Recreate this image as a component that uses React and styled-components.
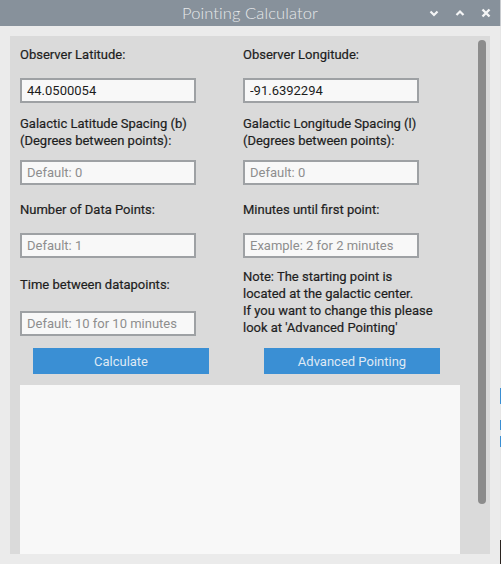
import React from "react";
import styled, { createGlobalStyle } from "styled-components";

const Global = createGlobalStyle`
  html, body { margin: 0; padding: 0; background: #ebebeb; }
  body { width: 501px; height: 564px; overflow: hidden; font-family: Roboto, "Liberation Sans", sans-serif; }
  * { box-sizing: border-box; }
`;

const Frame = styled.div`
  display: flex;
  width: 501px;
  height: 564px;
`;

const Window = styled.div`
  width: 500px;
  height: 564px;
  display: flex;
  flex-direction: column;
  background: #ebebeb;
`;

const EdgeStrip = styled.div`
  width: 1px;
  height: 564px;
  background: linear-gradient(
    #c9ccd0 0 26px,
    #e6e6e6 26px 388px,
    #3a8fd4 388px 404px,
    #e6e6e6 404px 420px,
    #3a8fd4 420px 430px,
    #e6e6e6 430px 436px,
    #3a8fd4 436px 447px,
    #e6e6e6 447px 540px,
    #2b2420 540px
  );
`;

const TitleBar = styled.div`
  height: 26px;
  background: #87919b;
  position: relative;
  display: flex;
  align-items: center;
  justify-content: center;
`;

const Title = styled.div`
  font-family: Lato, "Open Sans", sans-serif;
  font-weight: 300;
  font-size: 16.5px;
  color: #e6e8ea;
  letter-spacing: 0.1px;
`;

const TitleButtons = styled.div`
  position: absolute;
  right: 8px;
  top: 0;
  height: 26px;
  display: flex;
  align-items: center;
  gap: 14px;
`;

const TitleBtn = styled.span`
  width: 12px;
  height: 12px;
  display: flex;
  align-items: center;
  justify-content: center;
`;

const Body = styled.div`
  flex: 1;
  padding: 10px;
  display: flex;
`;

const Panel = styled.div`
  flex: 1;
  background: #dadada;
  position: relative;
  display: flex;
  flex-direction: column;
  padding-left: 10px;
`;

const FormGrid = styled.div`
  display: grid;
  grid-template-columns: 223px 220px;
  grid-template-rows: 37px 35px 47px 35px 39px 33px 44px 35px 40px;
  align-items: center;
`;

const Label = styled.div`
  font-size: 13px;
  line-height: 17px;
  font-weight: 400;
  color: #1e1e1e;
  white-space: nowrap;
  -webkit-text-stroke: 0.2px #1e1e1e;
  grid-row: ${(p) => p.$row};
  grid-column: ${(p) => p.$col};
`;

const Note = styled(Label)`
  grid-row: 7 / span 2;
`;

const Input = styled.input`
  grid-row: ${(p) => p.$row};
  grid-column: ${(p) => p.$col};
  width: 176px;
  height: 25px;
  border: 2px solid #9ea1a4;
  background: #f8f8f8;
  padding: 0 0 0 5px;
  font-family: Roboto, "Liberation Sans", sans-serif;
  font-size: 13px;
  color: #1c1c1c;
  outline: none;
  &::placeholder { color: #8e8e8e; }
`;

const Button = styled.button`
  grid-row: 9;
  grid-column: ${(p) => p.$col};
  margin-left: ${(p) => p.$offset}px;
  width: 176px;
  height: 26px;
  border: none;
  background: #3a8fd4;
  color: #dfe9f4;
  font-family: Roboto, "Liberation Sans", sans-serif;
  font-size: 13px;
  padding: 0;
`;

const Output = styled.div`
  margin-top: 4px;
  width: 440px;
  flex: 1;
  background: #f8f8f8;
`;

const Scrollbar = styled.div`
  position: absolute;
  right: 4px;
  top: 4px;
  width: 8px;
  height: 464px;
  background: #8c8c8c;
  border-radius: 4px;
`;

const Chevron = ({ up }) => (
  <svg width="10" height="8" viewBox="0 0 10 8">
    <path
      d={up ? "M1.5 6 L5 2.5 L8.5 6" : "M1.5 2.5 L5 6 L8.5 2.5"}
      fill="none"
      stroke="#f4f5f6"
      strokeWidth="2.2"
    />
  </svg>
);

const Close = () => (
  <svg width="10" height="10" viewBox="0 0 10 10">
    <path d="M1.5 1.5 L8.5 8.5 M8.5 1.5 L1.5 8.5" fill="none" stroke="#f4f5f6" strokeWidth="2.4" />
  </svg>
);

export default function App() {
  return (
    <Frame>
      <Global />
      <Window>
        <TitleBar>
          <Title>Pointing Calculator</Title>
          <TitleButtons>
            <TitleBtn><Chevron /></TitleBtn>
            <TitleBtn><Chevron up /></TitleBtn>
            <TitleBtn><Close /></TitleBtn>
          </TitleButtons>
        </TitleBar>
        <Body>
          <Panel>
            <FormGrid>
              <Label $row={1} $col={1}>Observer Latitude:</Label>
              <Label $row={1} $col={2}>Observer Longitude:</Label>
              <Input $row={2} $col={1} defaultValue="44.0500054" />
              <Input $row={2} $col={2} defaultValue="-91.6392294" />
              <Label $row={3} $col={1}>Galactic Latitude Spacing (b)<br />(Degrees between points):</Label>
              <Label $row={3} $col={2}>Galactic Longitude Spacing (l)<br />(Degrees between points):</Label>
              <Input $row={4} $col={1} placeholder="Default: 0" />
              <Input $row={4} $col={2} placeholder="Default: 0" />
              <Label $row={5} $col={1}>Number of Data Points:</Label>
              <Label $row={5} $col={2}>Minutes until first point:</Label>
              <Input $row={6} $col={1} placeholder="Default: 1" />
              <Input $row={6} $col={2} placeholder="Example: 2 for 2 minutes" />
              <Label $row={7} $col={1}>Time between datapoints:</Label>
              <Note $col={2}>
                Note: The starting point is<br />
                located at the galactic center.<br />
                If you want to change this please<br />
                look at 'Advanced Pointing'
              </Note>
              <Input $row={8} $col={1} placeholder="Default: 10 for 10 minutes" />
              <Button $col={1} $offset={13}>Calculate</Button>
              <Button $col={2} $offset={21}>Advanced Pointing</Button>
            </FormGrid>
            <Output />
            <Scrollbar />
          </Panel>
        </Body>
      </Window>
      <EdgeStrip />
    </Frame>
  );
}
